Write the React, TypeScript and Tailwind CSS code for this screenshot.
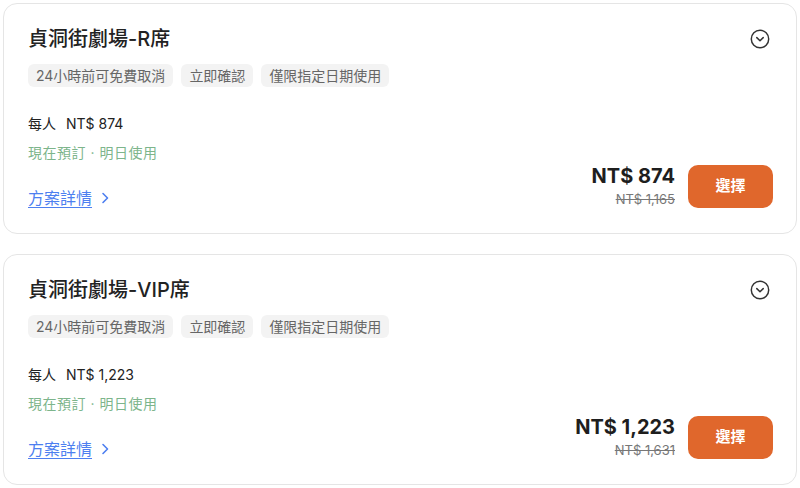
import React from "react";

const font = { fontFamily: '"Inter", "Noto Sans CJK TC", sans-serif' };

function ChevronCircle() {
  return (
    <svg width="22" height="22" viewBox="0 0 24 24" fill="none" stroke="#333" strokeWidth="1.6" strokeLinecap="round" strokeLinejoin="round">
      <circle cx="12" cy="12" r="9.5" />
      <path d="M8.5 10.5 12 14l3.5-3.5" />
    </svg>
  );
}

function Card({ title, per, price, orig }: { title: string; per: string; price: string; orig: string }) {
  const tags = ["24小時前可免費取消", "立即確認", "僅限指定日期使用"];
  return (
    <div className="h-[231px] rounded-[14px] border border-[#e5e5e5] bg-white pl-[24px] pr-[23px] pt-[20px] flex flex-col">
      <div className="flex justify-between items-start">
        <div className="text-[20px] leading-[30px] font-medium text-[#222]">{title}</div>
        <div className="mt-[4px] mr-[2px]"><ChevronCircle /></div>
      </div>
      <div className="mt-[10px] flex gap-[8px]">
        {tags.map((t) => (
          <div key={t} className="h-[23px] px-[8px] rounded-[6px] bg-[#f3f3f3] text-[14px] leading-[23px] text-[#666]">
            {t}
          </div>
        ))}
      </div>
      <div className="mt-[27px] flex justify-between items-end">
        <div className="flex flex-col">
          <div className="text-[14px] leading-[20px] text-[#222]">
            每人<span className="ml-[10px]">{per}</span>
          </div>
          <div className="mt-[9px] text-[14px] leading-[20px] text-[#7db58b] tracking-[0.5px]">現在預訂 · 明日使用</div>
          <div className="mt-[24px] flex items-center text-[16px] leading-[22px] text-[#4d7ff0]">
            <span className="underline underline-offset-[3px]">方案詳情</span>
            <svg className="ml-[8px]" width="10" height="12" viewBox="0 0 10 12" fill="none" stroke="#4d7ff0" strokeWidth="1.6" strokeLinecap="round" strokeLinejoin="round">
              <path d="M3 1.5 7.5 6 3 10.5" />
            </svg>
          </div>
        </div>
        <div className="flex items-end mb-[1px]">
          <div className="flex flex-col items-end mb-[1px]">
            <div className="text-[20px] leading-[24px] font-bold text-[#1e1e1e]">{price}</div>
            <div className="mt-[3px] text-[13px] leading-[16px] text-[#777] line-through">{orig}</div>
          </div>
          <button className="ml-[13px] w-[85px] h-[43px] rounded-[10px] bg-[#e0672c] text-white text-[15px] font-bold">選擇</button>
        </div>
      </div>
    </div>
  );
}

export default function App() {
  return (
    <div style={font} className="w-[800px] h-[488px] bg-white p-[3px] flex flex-col gap-[20px]">
      <Card title="貞洞街劇場-R席" per="NT$ 874" price="NT$ 874" orig="NT$ 1,165" />
      <Card title="貞洞街劇場-VIP席" per="NT$ 1,223" price="NT$ 1,223" orig="NT$ 1,631" />
    </div>
  );
}
